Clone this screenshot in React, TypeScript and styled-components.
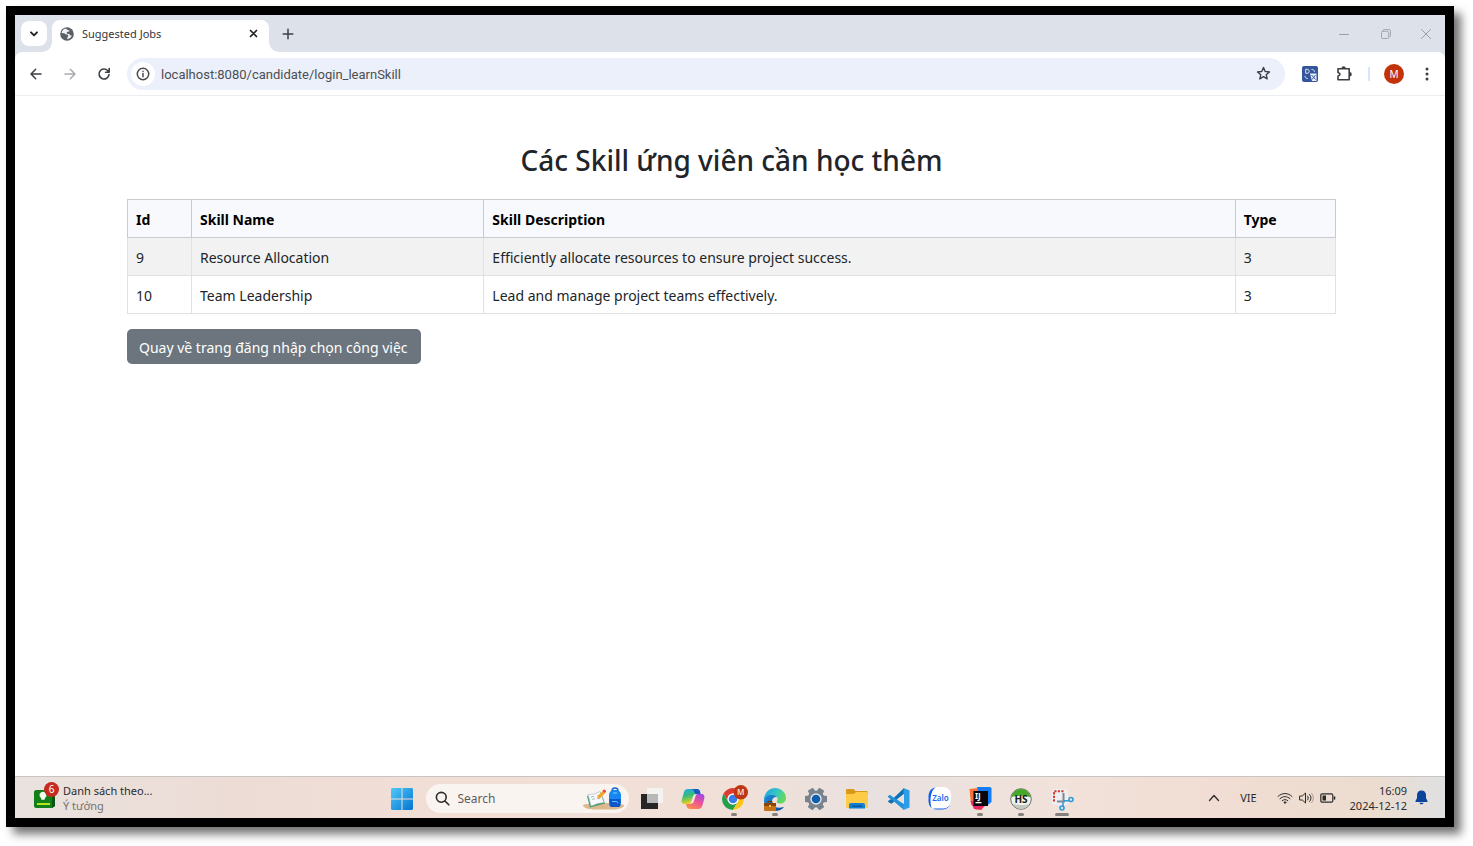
import React from "react";
import styled, { createGlobalStyle } from "styled-components";

const GlobalStyle = createGlobalStyle`
  *, *::before, *::after { box-sizing: border-box; }
  html, body { margin: 0; background: #fff; }
  body { font-family: "Noto Sans", "Open Sans", sans-serif; color: #212529; }
  button, input { font-family: inherit; }
  button { border: 0; padding: 0; background: none; color: inherit; cursor: pointer; }
  svg { display: block; flex: none; }
`;

const Desktop = styled.div`
  min-height: 100vh;
  padding: 6px 19px 19px 6px;
  display: flex;
  overflow: hidden;
`;

const Screen = styled.div`
  flex: 1;
  min-width: 0;
  display: flex;
  flex-direction: column;
  border: 9px solid #000;
  background: #fff;
  box-shadow: 7px 7px 9px rgba(0, 0, 0, 0.55);
`;

const TabStrip = styled.header`
  height: 37px;
  display: flex;
  align-items: flex-end;
  padding-left: 6px;
  background: #dde1e9;
`;

const TabListButton = styled.button`
  position: relative;
  z-index: 1;
  width: 26px;
  height: 25px;
  margin-bottom: 6px;
  display: grid;
  place-items: center;
  border-radius: 8px;
  background: #fff;
`;

const Tab = styled.div`
  position: relative;
  width: 217px;
  height: 32px;
  margin-left: 5px;
  padding: 0 11px 5px 8px;
  display: flex;
  align-items: center;
  gap: 8px;
  border-radius: 8px 8px 0 0;
  background: #fff;
  font-size: 11px;
  line-height: 14px;
  color: #33363a;

  &::before,
  &::after {
    content: "";
    position: absolute;
    bottom: 0;
    width: 9px;
    height: 9px;
  }
  &::before {
    left: -9px;
    background: radial-gradient(circle at 0 0, #dde1e9 8px, #fff 9px);
  }
  &::after {
    right: -9px;
    background: radial-gradient(circle at 100% 0, #dde1e9 8px, #fff 9px);
  }
`;

const TabTitle = styled.span`
  flex: 1;
  white-space: nowrap;
`;

const NewTab = styled.button`
  width: 28px;
  height: 28px;
  margin: 0 0 4px 5px;
  display: grid;
  place-items: center;
`;

const WindowControls = styled.div`
  margin-left: auto;
  height: 37px;
  display: flex;
  align-items: center;
  color: #9b9ea3;
`;

const WindowButton = styled.button`
  width: 42px;
  height: 36px;
  display: grid;
  place-items: center;

  &:last-child { width: 38px; }
`;

const ToolbarBack = styled.div`
  background: #dde1e9;
`;

const Toolbar = styled.nav`
  height: 44px;
  display: flex;
  align-items: center;
  padding: 0 8px 0 10px;
  border-radius: 7px 7px 0 0;
  border-bottom: 1px solid #ebedef;
  background: #fff;
  color: #474a4e;
`;

const NavButton = styled.button<{ $off?: boolean }>`
  width: 21px;
  height: 28px;
  margin-right: 13px;
  display: grid;
  place-items: center;
  color: ${(p) => (p.$off ? "#a9abae" : "#3c3f43")};
`;

const AddressBar = styled.div`
  flex: 1;
  min-width: 0;
  height: 32px;
  display: flex;
  align-items: center;
  padding: 0 14px 0 4px;
  border-radius: 16px;
  background: #ebf0fa;
`;

const SiteInfo = styled.button`
  width: 24px;
  height: 24px;
  display: grid;
  place-items: center;
  border-radius: 12px;
  background: #fff;
`;

const UrlInput = styled.input`
  flex: 1;
  min-width: 0;
  height: 24px;
  border: 0;
  padding: 2px 6px 0;
  background: none;
  outline: none;
  font-size: 13px;
  font-family: Roboto, sans-serif;
  color: #4b4e53;
`;

const ToolbarActions = styled.div`
  display: flex;
  align-items: center;
  padding-left: 15px;
`;

const ActionButton = styled.button`
  width: 20px;
  height: 28px;
  margin-right: 14px;
  display: grid;
  place-items: center;
  color: #3c3f43;

  &:last-child { margin-right: 0; }
`;

const Divider = styled.span`
  width: 2px;
  height: 14px;
  margin-right: 14px;
  background: #d6e5fb;
`;

const Avatar = styled.button`
  width: 20px;
  height: 20px;
  margin-right: 13px;
  border-radius: 10px;
  background: #c2330c;
  color: #fff;
  font-size: 10px;
  line-height: 20px;
`;

const Page = styled.main`
  flex: 1;
  padding: 46px 109px 24px 112px;
`;

const Title = styled.h2`
  margin: 0 0 20px;
  font-size: 28px;
  line-height: 37px;
  font-weight: 500;
  text-align: center;
`;

const SkillTable = styled.table`
  width: 100%;
  border-collapse: collapse;
  table-layout: fixed;
  font-size: 14px;
  line-height: 21px;
`;

const HeadCell = styled.th`
  height: 38px;
  padding: 2px 8px 0;
  border: 1px solid #c9cccf;
  background: #f8f9fc;
  color: #000;
  font-weight: 700;
  text-align: left;
`;

const BodyRow = styled.tr`
  &:nth-child(odd) { background: #f2f2f2; }
`;

const Cell = styled.td`
  height: 38px;
  padding: 2px 8px 0;
  border: 1px solid #dee2e6;
`;

const BackLink = styled.a`
  display: inline-block;
  height: 35px;
  margin-top: 15px;
  padding: 0 13px 0 12px;
  border-radius: 5px;
  background: #6c757d;
  color: #fff;
  font-size: 14px;
  line-height: 37px;
  text-decoration: none;
`;

const Taskbar = styled.footer`
  height: 42px;
  display: grid;
  grid-template-columns: 1fr auto 1fr;
  align-items: center;
  border-top: 1px solid #c9c4c2;
  background: linear-gradient(90deg, #e9e2de 0%, #eddcd6 15%, #f1dfd6 30%, #f1e0d8 50%, #e9e1df 60%, #f1e2da 73%, #f1ddd3 84%, #ecdccf 95%, #dfe1e2 100%);
`;

const Widget = styled.button`
  display: flex;
  align-items: center;
  gap: 4px;
  padding-left: 19px;
  text-align: left;
  font-size: 11px;
  line-height: 15px;
  color: #2b2b2b;
`;

const WidgetNote = styled.span`
  display: block;
  color: #77716f;
`;

const WidgetIcon = styled.span`
  width: 25px;
  height: 32px;
`;

const Apps = styled.div`
  display: flex;
  align-items: center;
  padding-left: 4px;
`;

const AppButton = styled.button<{ $mark?: number }>`
  position: relative;
  width: 41px;
  height: 41px;
  padding-top: 2px;
  display: grid;
  place-items: center;

  &::after {
    content: "";
    position: absolute;
    left: calc(50% - ${(p) => (p.$mark || 0) / 2}px);
    bottom: 2px;
    width: ${(p) => p.$mark || 0}px;
    height: 3px;
    border-radius: 2px;
    background: #85807e;
  }
`;

const SearchBox = styled.label`
  width: 203px;
  height: 29px;
  margin: 2px 3px 0;
  padding: 0 4px 0 9px;
  display: flex;
  align-items: center;
  border-radius: 15px;
  background: #faf4f1;
`;

const SearchInput = styled.input`
  flex: 1;
  min-width: 0;
  border: 0;
  padding: 0 8px;
  background: none;
  outline: none;
  font-size: 12px;

  &::placeholder { color: #5f5c5b; opacity: 1; }
`;

const Tray = styled.div`
  display: flex;
  align-items: center;
  justify-content: flex-end;
  padding-right: 17px;
  font-size: 11px;
  color: #2b2b2b;
`;

const TrayButton = styled.button`
  margin-right: 20px;
  font-size: 11px;
`;

const Status = styled.button`
  display: flex;
  align-items: center;
  gap: 6px;
  margin-right: 14px;
`;

const Clock = styled.time`
  margin-right: 8px;
  text-align: right;
  line-height: 15px;
`;

const stroke = { fill: "none", stroke: "currentColor", strokeLinecap: "round" as const, strokeLinejoin: "round" as const };

const ChevronDown = () => (
  <svg width="10" height="8" viewBox="0 0 10 8" {...stroke} stroke="#1f2023" strokeWidth="1.9"><path d="M2 2.3 5 5.3 8 2.3" /></svg>
);
const Globe = () => (
  <svg width="14" height="14" viewBox="0 0 14 14">
    <circle cx="7" cy="7" r="6.8" fill="#5b5f66" />
    <path d="M5.6 1.5C3.500 2 1.900 3.700 1.500 6l2.600.3c.6.1 1 .5 1.200 1l1.900.3c.8.2 1.200.9.900 1.600l-.7 1.200-.1 1.800c2-.2 3.800-1.600 4.600-3.600l-1.700-.2-.9-1.500-2.300-.2-.4-1.300 1.400-.8 1.100.1.300-1.100-1.700-.5z" fill="#f1f3f5" />
  </svg>
);
const Cross = () => (
  <svg width="9" height="9" viewBox="0 0 9 9" {...stroke} stroke="#202124" strokeWidth="1.7"><path d="m1.500 1.500 6 6m0-6-6 6" /></svg>
);
const Plus = () => (
  <svg width="12" height="12" viewBox="0 0 12 12" {...stroke} stroke="#3c3f43" strokeWidth="1.500"><path d="M6 1.200v9.600M1.200 6h9.600" /></svg>
);
const Arrow = ({ flip }: { flip?: boolean }) => (
  <svg width="14" height="14" viewBox="0 0 14 14" {...stroke} strokeWidth="1.500">
    <path d={flip ? "M2 7h10M7.300 2.200 12 7l-4.700 4.800" : "M12 7H2m4.700-4.800L2 7l4.700 4.800"} />
  </svg>
);
const Reload = () => (
  <svg width="14" height="14" viewBox="0 0 14 14" {...stroke} strokeWidth="1.600">
    <path d="M12 7.600A5 5 0 1 1 10.600 3.500L12 5M12.200 1.600V5.200H8.600" />
  </svg>
);
const Info = () => (
  <svg width="14" height="14" viewBox="0 0 14 14" {...stroke} strokeWidth="1.500">
    <circle cx="7" cy="7" r="5.700" /><path d="M7 6.500v3.200M7 4.300v.1" />
  </svg>
);
const Star = () => (
  <svg width="15" height="15" viewBox="0 0 15 15" {...stroke} strokeWidth="1.400" stroke="#3c3f43">
    <path d="m7.500 1.500 1.700 4 4.300.4-3.300 2.800 1 4.200-3.700-2.200-3.700 2.200 1-4.200L1.500 5.900l4.300-.4z" />
  </svg>
);
const Translate = () => (
  <svg width="16" height="16" viewBox="0 0 16 16">
    <rect width="16" height="16" rx="2" fill="#35559c" />
    <path d="M8 7.500h6.500V15H10z" fill="#e8eef9" />
    <path d="M3.700 3.300h1.500a1.900 1.900 0 0 1 0 4H3.700zM3 9.800c0 1.700 1 2.700 2.800 2.700M9.500 3.500c2 0 3 .8 3 2.300" fill="none" stroke="#dbe5f8" strokeWidth="1" />
    <path d="m9.500 9 4 4.500M13.500 9l-3.500 4.500" fill="none" stroke="#35559c" strokeWidth="1" />
  </svg>
);
const Puzzle = () => (
  <svg width="17" height="17" viewBox="0 0 17 17">
    <path d="M2 3.800h11.200v11H2v-3.600l1.500-1a1.200 1.200 0 0 0 0-1.800L2 7.400z" fill="none" stroke="#3c3f43" strokeWidth="1.600" strokeLinejoin="round" />
    <path d="M5.400 3.500a2.200 2.200 0 0 1 4.400 0zM13.600 7a2.200 2.200 0 0 1 0 4.400z" fill="#3c3f43" />
  </svg>
);
const Dots = () => (
  <svg width="4" height="14" viewBox="0 0 4 14" fill="#3c3f43"><circle cx="2" cy="2" r="1.500" /><circle cx="2" cy="7" r="1.500" /><circle cx="2" cy="12" r="1.500" /></svg>
);

const Ideas = () => (
  <svg width="25" height="32" viewBox="0 0 25 32">
    <path d="M2 8h17l2 2v14l-3 2H2c-1 0-2-1-2-2V10c0-1 1-2 2-2z" fill="#128018" />
    <path d="m18 10 3-1v15l-3 2z" fill="#0b5411" />
    <path d="M5.500 13a3.500 3.500 0 1 1 6 2.600c-.7.800-.8 1.300-.8 2.200H7.300c0-.9-.1-1.400-.8-2.200a4 4 0 0 1-1-2.600z" fill="#f3ffee" />
    <rect x="3" y="21" width="13" height="2" fill="#b6e51a" />
    <circle cx="17.500" cy="7.500" r="7.500" fill="#c72b20" />
    <text x="17.500" y="11" fontSize="10" textAnchor="middle" fill="#fff">6</text>
  </svg>
);
const Windows = () => (
  <svg width="22" height="22" viewBox="0 0 22 22">
    <defs><linearGradient id="win" x1="0" y1="0" x2="1" y2="1"><stop stopColor="#4fcaf8" /><stop offset="1" stopColor="#0473d2" /></linearGradient></defs>
    <path d="M1 0h9.500v10.500H0V1zM11.500 0H21l1 1v9.500H11.500zM0 11.500h10.500V22H1l-1-1zM11.500 11.500H22V21l-1 1h-9.500z" fill="url(#win)" />
  </svg>
);
const Magnifier = () => (
  <svg width="15" height="15" viewBox="0 0 15 15" {...stroke} stroke="#2b2b2b" strokeWidth="1.600"><circle cx="6.300" cy="6.300" r="4.900" /><path d="m10 10 3.800 3.800" /></svg>
);
const SchoolArt = () => (
  <svg width="43" height="23" viewBox="0 0 43 23">
    <path d="M1 18c5-2 33-3 41 0 1 2-4 4-9 4.500H12C6 22 1 21 1 18z" fill="#dcb98c" />
    <path d="m5 9 14-3.500 4 11L8 20.500z" fill="#3f9c66" />
    <path d="m6 7.500 6-.5 6-2.500 4 11-6 1-7 2.500z" fill="#f7f8fb" stroke="#a9b6c2" strokeWidth=".6" />
    <path d="m9 10 3-.6m-2 3 3-.7m2-2.500 2.500-.9m-1.500 3.500 2.500-.8" stroke="#8f9bab" strokeWidth=".7" />
    <path d="m15 12 1-3.500 5-5 2.500 2.300-5 5z" fill="#f5a52b" /><path d="m20.500 4 1.300-1.400c.7-.5 2.700 1.200 2.200 2L22.800 6z" fill="#e7493c" />
    <path d="M30 4c0-4 6-4 6 0" fill="none" stroke="#1566cf" strokeWidth="1.500" />
    <rect x="27" y="3" width="12" height="17" rx="5" fill="#1687f0" />
    <path d="M27.500 12h11v6c0 1-1 2-2 2h-7c-1 0-2-1-2-2z" fill="#0b56c8" /><path d="M30 14.500h5l1 2" stroke="#5cc4ff" fill="none" /><path d="M31 6h4" stroke="#7bd1ff" />
  </svg>
);
const TaskView = () => (
  <svg width="24" height="22" viewBox="0 0 24 22">
    <path d="M1 6h17v15H1z" fill="#262626" /><path d="M7 0h16v15H7z" fill="#f4f3f2" /><path d="M7 6h11v9H7z" fill="#b8b8b8" />
  </svg>
);
const Copilot = () => (
  <svg width="24" height="22" viewBox="0 0 24 22">
    <defs>
      <linearGradient id="cpA" x1="0" y1="0" x2=".3" y2="1"><stop stopColor="#1aa8ef" /><stop offset=".5" stopColor="#38bd75" /><stop offset="1" stopColor="#f3d11d" /></linearGradient>
      <linearGradient id="cpB" x1=".8" y1="0" x2=".2" y2="1"><stop stopColor="#a347e8" /><stop offset=".5" stopColor="#f0558f" /><stop offset="1" stopColor="#fa9049" /></linearGradient>
    </defs>
    <path d="M7 1h9c1.500 0 2.500 1 3 2.500L19.500 6H15c-2 0-2.500 1-3 2.500L10 14c-.6 1.600-1.500 2-3 2H4c-3 0-4-2-3-5l2-7c.6-2 2-3 4-3z" fill="url(#cpA)" />
    <path d="M8 1h8c1.500 0 2.500 1 3 2.500L19.500 6H14l-1-3c-.5-1.300-1.500-2-3-2z" fill="#1956c7" />
    <path d="M17 21H9c-2 0-3-1-3.500-3L5 16h4c2 0 2.700-1 3.200-2.500L14 8.500C14.600 7 15.500 6 17 6h3c3 0 4 2 3.200 5l-2 7c-.7 2-2 3-4.200 3z" fill="url(#cpB)" />
    <path d="M13.300 7.500h1.500l-2.600 7.500h-1.700z" fill="#f7e6e2" />
  </svg>
);
const Chrome = () => (
  <svg width="28" height="28" viewBox="0 0 28 28">
    <circle cx="13" cy="14" r="11" fill="#fff" />
    <path d="M3.500 8.500a11 11 0 0 1 19 0H13a5.500 5.500 0 0 0-4.800 8.200z" fill="#df3b30" />
    <path d="M3.500 8.500A11 11 0 0 0 13 25l4.800-8.200a5.500 5.500 0 0 1-9.500 0z" fill="#279e4b" />
    <path d="M22.500 8.500A11 11 0 0 1 13 25l4.800-8.200A5.500 5.500 0 0 0 13 8.500z" fill="#fbc51b" />
    <circle cx="13" cy="14" r="5.400" fill="#fff" /><circle cx="13" cy="14" r="4.300" fill="#3a7cec" />
    <circle cx="20.800" cy="7.300" r="7.200" fill="#bd3714" />
    <text x="20.800" y="10.300" fontSize="8" fontWeight="600" textAnchor="middle" fill="#f8dfd6">M</text>
  </svg>
);
const Edge = () => (
  <svg width="24" height="24" viewBox="0 0 24 24">
    <defs>
      <linearGradient id="edA" x1="0" y1="0" x2="1" y2=".4"><stop stopColor="#219fe0" /><stop offset=".6" stopColor="#35c7c6" /><stop offset="1" stopColor="#65d95b" /></linearGradient>
      <linearGradient id="edB" x1="0" y1="0" x2="1" y2="1"><stop stopColor="#1c8fdc" /><stop offset="1" stopColor="#0c4a9e" /></linearGradient>
    </defs>
    <path d="M1 13C1 6 6 1 12 1s11 4.500 11 10c0 3.500-2.500 5.500-6 5.500-2.500 0-4-1-3-2.500 1.500-2.200 0-5-3.500-5C6 9 2 11 1 13z" fill="url(#edA)" />
    <path d="M1 13c1-3.500 4-5.500 8.500-5 2 .2 3.500 1 4 2-3 0-4.500 2-4.500 4.500 0 4 4 7 9 6 1.500-.3 2.500-.8 3-.5-2 2.500-5 4-9 4-6.500 0-11-5-11-11z" fill="url(#edB)" />
    <rect x="1" y="16" width="12" height="8" rx="1" fill="#c4721a" /><path d="M1 16h12v3H1z" fill="#8b4509" /><path d="M5 16v-1.500h4V16" fill="none" stroke="#6f3607" /><path d="M6 18h2v2H6z" fill="#f4c146" />
  </svg>
);
const Gear = () => (
  <svg width="22" height="22" viewBox="0 0 22 22">
    <g fill="#77828c">
      {[30, 90, 150].map((a) => <rect key={a} x="7.800" y="-.3" width="6.400" height="22.600" rx="1.500" transform={`rotate(${a} 11 11)`} />)}
      <circle cx="11" cy="11" r="8.600" />
    </g>
    <circle cx="11" cy="11" r="5.700" fill="#e3e9ee" /><circle cx="11" cy="11" r="4.300" fill="#0f5dab" />
  </svg>
);
const Folder = () => (
  <svg width="22" height="20" viewBox="0 0 22 20">
    <path d="M0 1.500C0 .5.500 0 1.500 0h6L9.500 2H21l1 1v4H0z" fill="#d99a17" />
    <path d="M0 5h8l2-2h11l1 1v15H1l-1-1z" fill="#fdcb45" />
    <path d="M3 19.500v-3.500c0-1.300.7-2 2-2h12c1.300 0 2 .7 2 2v3.500z" fill="#1180d3" /><path d="M6 16.500h10v1.300H6z" fill="#0a4f94" />
  </svg>
);
const Code = () => (
  <svg width="23" height="22" viewBox="0 0 23 22">
    <path d="m.7 8.700 2-1.700 4 3L17 0v6L4.500 15.700l-1.800-.7-2-1.700L4 11z" fill="#1070b3" />
    <path d="m.7 8.700 2-1.700L17 16v6L4 11z" fill="#2492d8" />
    <path d="m16.500 0 6 2.500v17l-6 2.500z" fill="#2c9de6" /><path d="m10.500 11 6.500-5v10z" fill="#e9e1df" />
  </svg>
);
const Zalo = () => (
  <svg width="23" height="23" viewBox="0 0 23 23">
    <rect x=".5" y=".5" width="22" height="22" rx="8" fill="#0e5ff0" />
    <path d="M8 0h7.500A7.500 7.500 0 0 1 23 7.500V14a7.500 7.500 0 0 1-7.500 7.500H9c-2 0-3.500 0-5 .4C2 18 1 4 8 0z" fill="#fff" />
    <text x="12.500" y="13.500" fontSize="8" fontWeight="600" textAnchor="middle" fill="#146af0">Zalo</text>
  </svg>
);
const IntelliJ = () => (
  <svg width="23" height="23" viewBox="0 0 23 23">
    <path d="M8 0h13l1.500 1v14l-5 4H8z" fill="#147cf6" /><path d="M.5 2 9 1v12l5 6-1 4-6-.5-5-5z" fill="#fb7038" /><path d="m1.500 14 3.500 8 7 .5 4-3.500-8-5z" fill="#ed2969" />
    <rect x="4.500" y="4" width="14.500" height="15" fill="#08080a" />
    <text x="6" y="11.500" fontSize="8" fontWeight="700" fill="#fff">IJ</text><path d="M6.500 15h6v1.300h-6z" fill="#fff" />
  </svg>
);
const HeidiSql = () => (
  <svg width="22" height="22" viewBox="0 0 22 22">
    <circle cx="11" cy="11" r="10.300" fill="#f2f3ef" stroke="#6e766c" strokeWidth="1" />
    <path d="M1.300 9.500a9.800 9.800 0 0 1 19.400 0c-5-2.500-14.500-2.500-19.400 0z" fill="#46a82a" /><path d="M2.500 15.500a9.500 9.500 0 0 0 17 0c-4 2-13 2-17 0z" fill="#c3c8c1" />
    <text x="11" y="14.500" fontSize="10" fontWeight="700" textAnchor="middle" fill="#16210f">HS</text>
  </svg>
);
const Snip = () => (
  <svg width="24" height="24" viewBox="0 0 24 24">
    <rect x="2" y="2" width="16" height="16" rx="2" fill="#edeff2" />
    <path d="M4 14.500V4.300h10" fill="none" stroke="#d63a25" strokeWidth="2" strokeDasharray="2.200 1.300" />
    <path d="M13.500 6v9.500M7 14.500h8" stroke="#7d8893" strokeWidth="2" />
    <g fill="none" stroke="#2d9bdc" strokeWidth="1.600"><circle cx="21" cy="12.500" r="2" /><circle cx="12" cy="21" r="2" /><path d="M13 19.200v-4M19 13.700h-5" /></g>
  </svg>
);
const Wifi = () => (
  <svg width="16" height="12" viewBox="0 0 16 12" {...stroke} strokeWidth="1">
    <path d="M1 4.500c4-4 10-4 14 0M3 6.700c3-2.800 7-2.800 10 0M5.200 8.700c1.700-1.500 3.900-1.500 5.600 0" /><circle cx="8" cy="10.500" r=".8" fill="currentColor" />
  </svg>
);
const Speaker = () => (
  <svg width="15" height="12" viewBox="0 0 15 12" {...stroke} strokeWidth="1">
    <path d="M1 4h2.300L6.500 1v10L3.300 8H1zM8.500 4c1 1.200 1 2.800 0 4M10.500 2.500c2 2 2 5 0 7" /><path d="M12.500 1.200c2.500 3 2.500 6.600 0 9.600" opacity=".35" />
  </svg>
);
const Battery = () => (
  <svg width="16" height="10" viewBox="0 0 16 10" {...stroke} strokeWidth="1.200">
    <rect x=".8" y=".8" width="12" height="8.400" rx="1.500" /><path d="M2.500 2.500H6v5H2.500z" fill="currentColor" stroke="none" /><path d="M14.500 4v2" strokeWidth="1.600" />
  </svg>
);
const Bell = () => (
  <svg width="13" height="15" viewBox="0 0 13 15" fill="#0a459b"><path d="M6.500.5C3.700.5 2 2.500 2 5v3L.5 11v1h12v-1L11 8V5C11 2.500 9.300.5 6.500.5zM4.500 12.800h4c-.3 2-3.700 2-4 0z" /></svg>
);

const skills = [
  { id: 9, name: "Resource Allocation", description: "Efficiently allocate resources to ensure project success.", type: 3 },
  { id: 10, name: "Team Leadership", description: "Lead and manage project teams effectively.", type: 3 },
];

const apps = [
  { name: "Task view", icon: <TaskView /> },
  { name: "Copilot", icon: <Copilot /> },
  { name: "Chrome", icon: <Chrome />, mark: 6 },
  { name: "Edge", icon: <Edge />, mark: 6 },
  { name: "Settings", icon: <Gear /> },
  { name: "File Explorer", icon: <Folder /> },
  { name: "Visual Studio Code", icon: <Code /> },
  { name: "Zalo", icon: <Zalo /> },
  { name: "IntelliJ IDEA", icon: <IntelliJ />, mark: 6 },
  { name: "HeidiSQL", icon: <HeidiSql />, mark: 6 },
  { name: "Snipping Tool", icon: <Snip />, mark: 14 },
];

export default function App() {
  return (
    <Desktop>
      <GlobalStyle />
      <Screen>
        <TabStrip>
          <TabListButton aria-label="Search tabs"><ChevronDown /></TabListButton>
          <Tab>
            <Globe />
            <TabTitle>Suggested Jobs</TabTitle>
            <button aria-label="Close tab"><Cross /></button>
          </Tab>
          <NewTab aria-label="New tab"><Plus /></NewTab>
          <WindowControls>
            <WindowButton aria-label="Minimize">
              <svg width="10" height="10" viewBox="0 0 10 10" {...stroke}><path d="M0 5.500h10" /></svg>
            </WindowButton>
            <WindowButton aria-label="Restore">
              <svg width="10" height="10" viewBox="0 0 11 11" {...stroke}><rect x=".5" y="2.500" width="8" height="8" rx="1.500" /><path d="M2.500 1C3 .5 3.500.5 4 .5h4.500a2 2 0 0 1 2 2V7c0 .8-.2 1.200-.7 1.500" /></svg>
            </WindowButton>
            <WindowButton aria-label="Close">
              <svg width="10" height="10" viewBox="0 0 10 10" {...stroke}><path d="m.5.5 9 9m0-9-9 9" /></svg>
            </WindowButton>
          </WindowControls>
        </TabStrip>
        <ToolbarBack>
          <Toolbar>
            <NavButton aria-label="Back"><Arrow /></NavButton>
            <NavButton aria-label="Forward" $off><Arrow flip /></NavButton>
            <NavButton aria-label="Reload"><Reload /></NavButton>
            <AddressBar>
              <SiteInfo aria-label="Site information"><Info /></SiteInfo>
              <UrlInput aria-label="Address" defaultValue="localhost:8080/candidate/login_learnSkill" />
              <button aria-label="Bookmark"><Star /></button>
            </AddressBar>
            <ToolbarActions>
              <ActionButton aria-label="Translate"><Translate /></ActionButton>
              <ActionButton aria-label="Extensions"><Puzzle /></ActionButton>
              <Divider />
              <Avatar aria-label="Profile M">M</Avatar>
              <ActionButton aria-label="Menu"><Dots /></ActionButton>
            </ToolbarActions>
          </Toolbar>
        </ToolbarBack>
        <Page>
          <Title>Các Skill ứng viên cần học thêm</Title>
          <SkillTable>
            <colgroup>
              <col style={{ width: "5.3%" }} />
              <col style={{ width: "24.2%" }} />
              <col style={{ width: "62.2%" }} />
              <col style={{ width: "8.3%" }} />
            </colgroup>
            <thead>
              <tr>
                <HeadCell>Id</HeadCell>
                <HeadCell>Skill Name</HeadCell>
                <HeadCell>Skill Description</HeadCell>
                <HeadCell>Type</HeadCell>
              </tr>
            </thead>
            <tbody>
              {skills.map((s) => (
                <BodyRow key={s.id}>
                  <Cell>{s.id}</Cell>
                  <Cell>{s.name}</Cell>
                  <Cell>{s.description}</Cell>
                  <Cell>{s.type}</Cell>
                </BodyRow>
              ))}
            </tbody>
          </SkillTable>
          <BackLink href="#">Quay về trang đăng nhập chọn công việc</BackLink>
        </Page>
        <Taskbar>
          <Widget>
            <WidgetIcon><Ideas /></WidgetIcon>
            <span>Danh sách theo...<WidgetNote>Ý tưởng</WidgetNote></span>
          </Widget>
          <Apps>
            <AppButton aria-label="Start"><Windows /></AppButton>
            <SearchBox>
              <Magnifier />
              <SearchInput placeholder="Search" aria-label="Search" />
              <SchoolArt />
            </SearchBox>
            {apps.map((a) => (
              <AppButton key={a.name} aria-label={a.name} $mark={a.mark}>{a.icon}</AppButton>
            ))}
          </Apps>
          <Tray>
            <TrayButton aria-label="Show hidden icons">
              <svg width="12" height="8" viewBox="0 0 12 8" {...stroke} strokeWidth="1.300"><path d="m1.500 6.500 4.500-5 4.500 5" /></svg>
            </TrayButton>
            <TrayButton>VIE</TrayButton>
            <Status aria-label="Network, sound, battery"><Wifi /><Speaker /><Battery /></Status>
            <Clock>16:09<br />2024-12-12</Clock>
            <Bell />
          </Tray>
        </Taskbar>
      </Screen>
    </Desktop>
  );
}
